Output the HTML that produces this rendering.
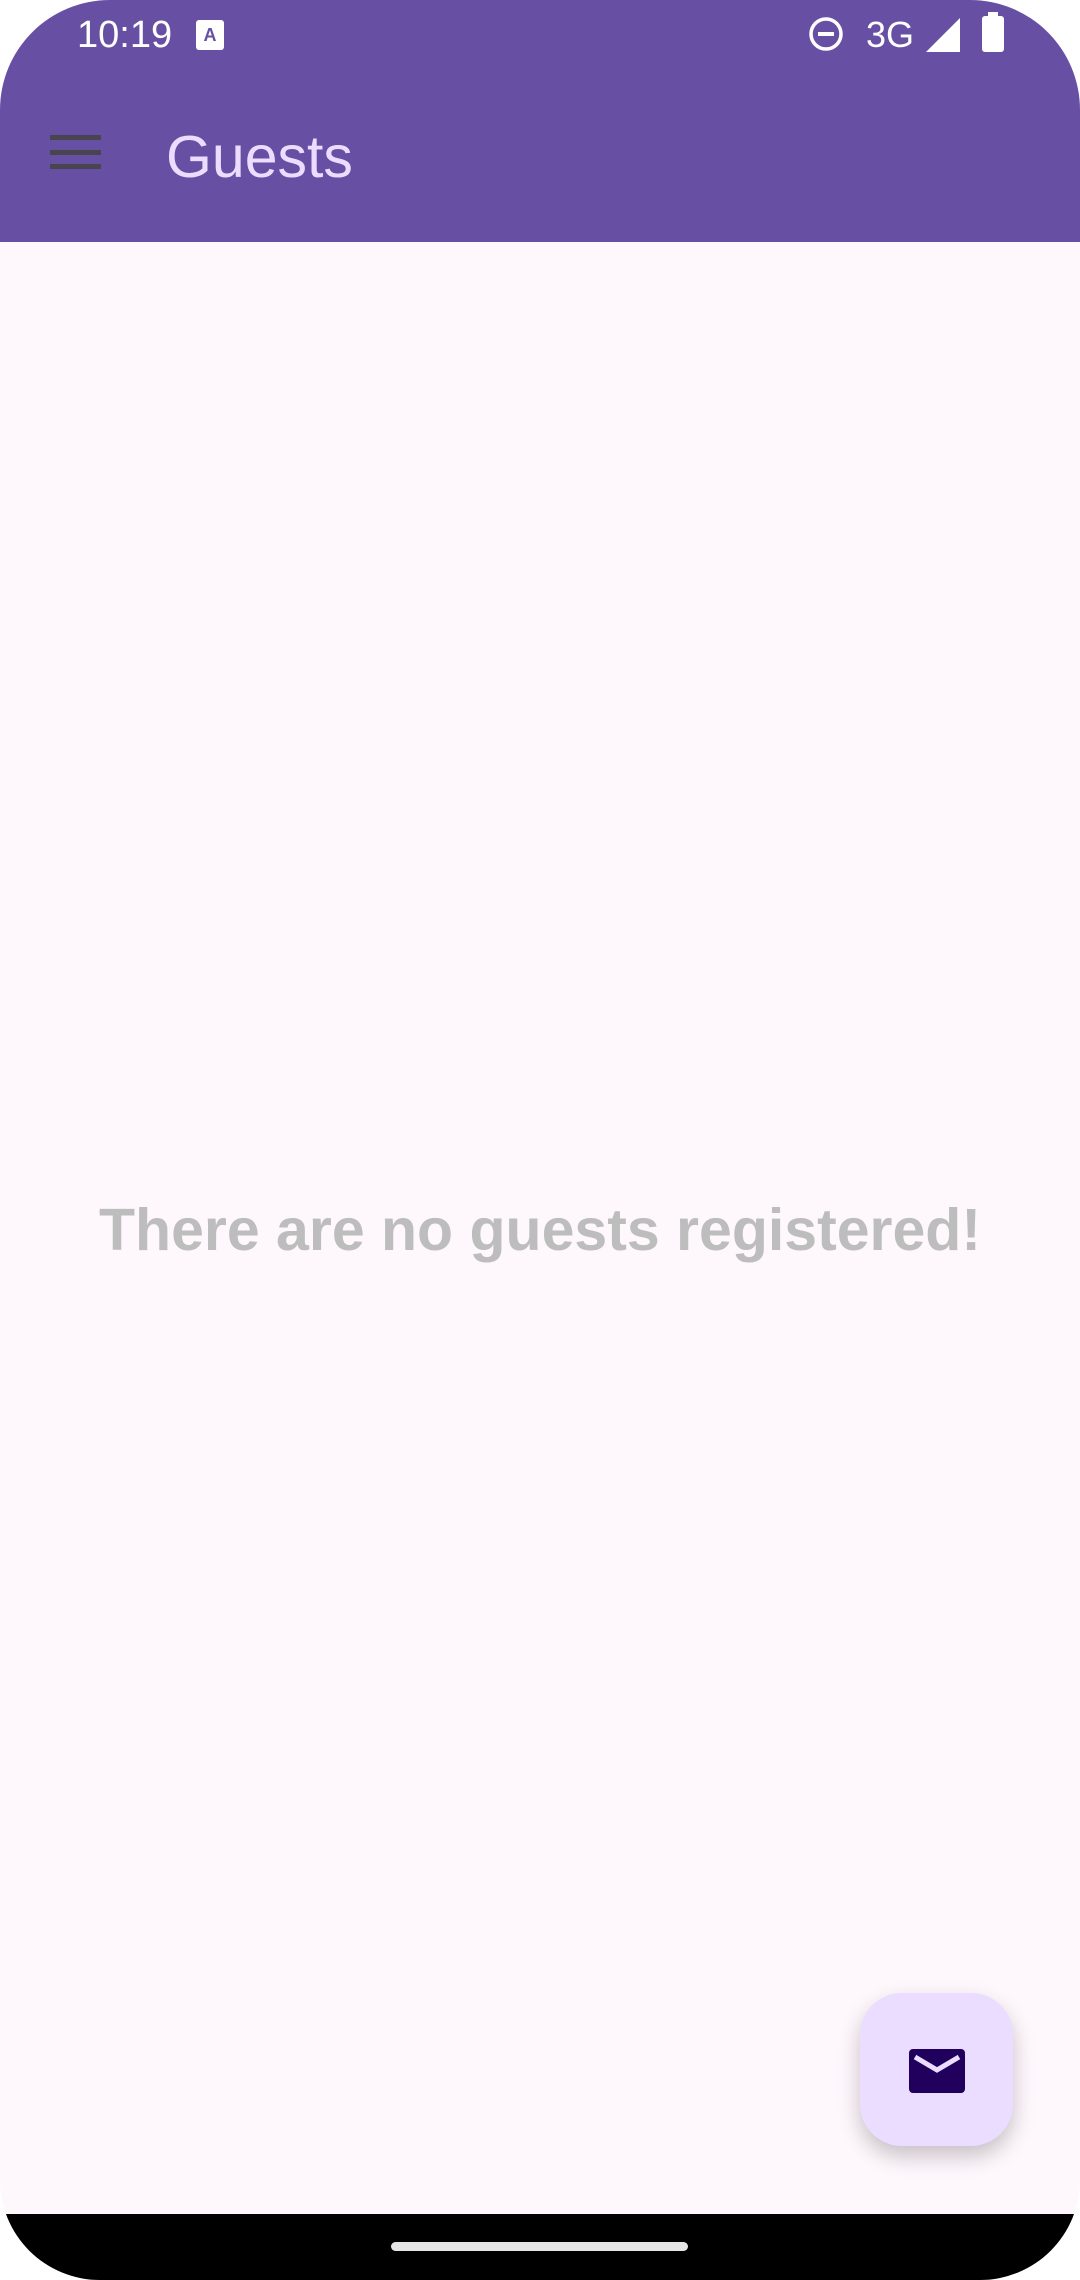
<!DOCTYPE html>
<html><head><style>
html,body{margin:0;padding:0;background:#fff;}
body{width:1080px;height:2280px;position:relative;overflow:hidden;font-family:"Liberation Sans",sans-serif;}
.screen{position:absolute;left:0;top:0;width:1080px;height:2280px;background:#fef7fc;border-radius:110px 110px 100px 100px;overflow:hidden;}
.top{position:absolute;left:0;top:0;width:1080px;height:242px;background:#6750a4;}
.time{position:absolute;left:77px;top:14px;color:#fff;font-size:38px;}
.title{position:absolute;left:166px;top:123px;color:#eaddff;font-size:59px;}
.ham{position:absolute;left:50px;width:51px;height:5px;background:#49454f;}
.msg{position:absolute;left:0;width:1080px;top:1196px;text-align:center;color:#bdbdbd;font-weight:bold;font-size:59px;}
.fab{position:absolute;left:860px;top:1993px;width:153px;height:153px;border-radius:42px;background:#eaddff;box-shadow:0 10px 22px rgba(0,0,0,0.22);}
.nav{position:absolute;left:0;top:2214px;width:1080px;height:66px;background:#000;}
.pill{position:absolute;left:391px;top:2242px;width:297px;height:9px;border-radius:5px;background:#e6e6e6;}
</style></head><body>
<div class="screen">
<div class="top">
<div class="time">10:19</div>
<svg style="position:absolute;left:196px;top:20px" width="28" height="30" viewBox="0 0 28 30"><rect width="28" height="30" rx="3" fill="#fff"/><text x="14" y="21" font-size="18" font-family="Liberation Sans" text-anchor="middle" fill="#6750a4" font-weight="bold">A</text></svg>
<svg style="position:absolute;left:808px;top:16px" width="36" height="36" viewBox="0 0 36 36"><circle cx="18" cy="18" r="15" fill="none" stroke="#fff" stroke-width="3.5"/><rect x="10" y="16" width="16" height="4" fill="#fff"/></svg>
<div style="position:absolute;left:866px;top:14px;color:#fff;font-size:36px;">3G</div>
<svg style="position:absolute;left:926px;top:18px" width="36" height="34" viewBox="0 0 36 34"><polygon points="34,0 34,34 0,34" fill="#fff"/></svg>
<div style="position:absolute;left:982px;top:16px;width:22px;height:36px;background:#fff;border-radius:3px;"></div>
<div style="position:absolute;left:988px;top:12px;width:10px;height:6px;background:#fff;"></div>
<div class="ham" style="top:135px"></div><div class="ham" style="top:150px"></div><div class="ham" style="top:164px"></div>
<div class="title">Guests</div>
</div>
<div class="msg">There are no guests registered!</div>
<div class="fab"><svg style="position:absolute;left:49px;top:56px" width="56" height="44" viewBox="0 0 56 44"><rect width="56" height="44" rx="4" fill="#21005d"/><polyline points="6,8 28,21 50,8" fill="none" stroke="#eaddff" stroke-width="5"/></svg></div>
<div class="nav"></div>
<div class="pill"></div>
</div>
</body></html>
